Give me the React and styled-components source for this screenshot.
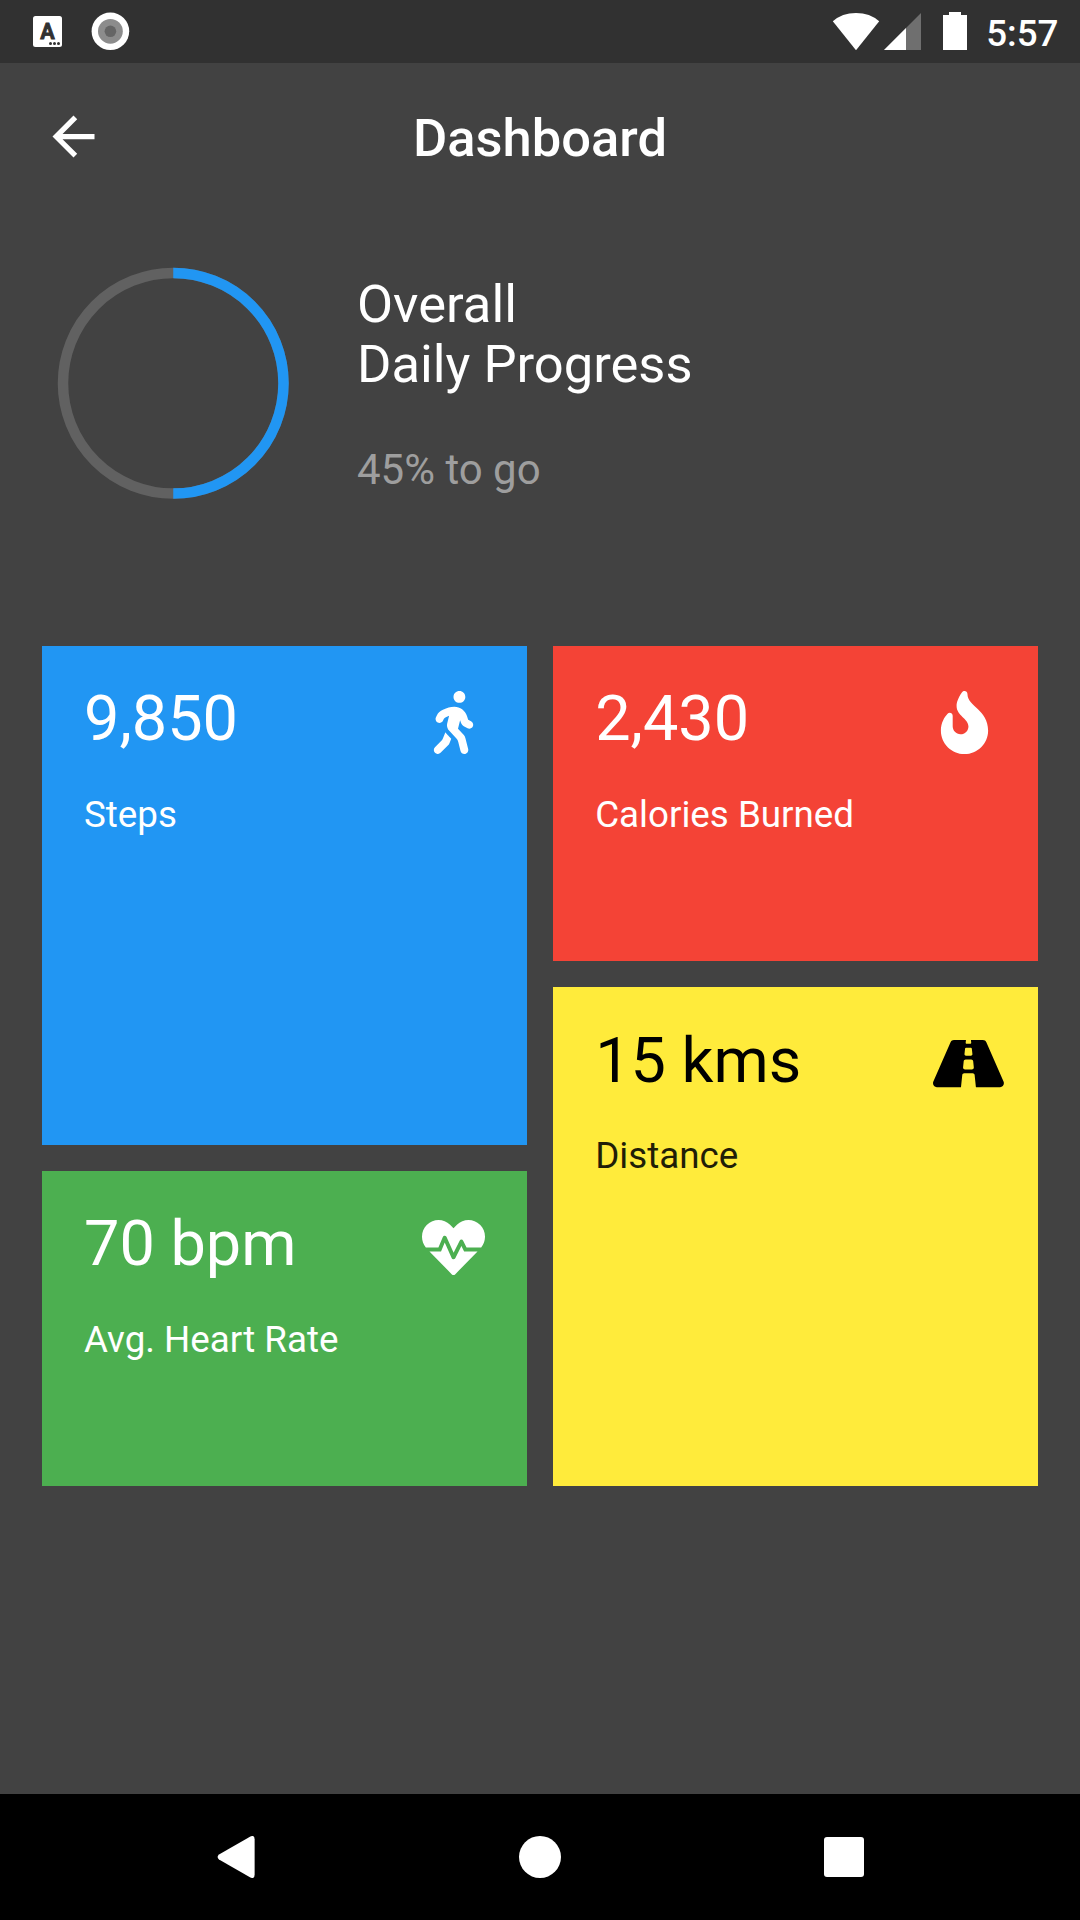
import React from "react";
import styled, { createGlobalStyle } from "styled-components";
import { FaWalking, FaFire, FaRoad, FaHeartbeat } from "react-icons/fa";

const GlobalStyle = createGlobalStyle`
  * { box-sizing: border-box; }
  body { margin: 0; background: #424242; font-family: Roboto, "Noto Sans", sans-serif; }
  h1, h2, p { margin: 0; font-weight: 400; }
  svg { display: block; flex: none; }
`;

const Screen = styled.div`
  width: 1080px;
  height: 1920px;
  display: flex;
  flex-direction: column;
  background: #424242;
  color: #fff;
  overflow: hidden;
`;

const StatusBar = styled.header`
  height: 63px;
  flex: none;
  display: flex;
  justify-content: space-between;
  padding: 0 21.5px 0 33.3px;
  background: #313131;
`;

const StatusGroup = styled.div`
  display: flex;
  align-items: center;
  gap: ${(p) => p.$gap}px;
`;

const KeyboardBadge = styled.div`
  width: 28.3px;
  height: 31px;
  border-radius: 2.5px;
  background: #fff;
  display: flex;
  flex-direction: column;
  align-items: center;
  padding-top: 7px;
`;

const BadgeLetter = styled.span`
  height: 17px;
  font-size: 21.5px;
  line-height: 17px;
  font-weight: 700;
  color: #313131;
  -webkit-text-stroke: 0.8px #313131;
`;

const BadgeDots = styled.div`
  display: flex;
  align-self: flex-end;
  gap: 1px;
  padding: 1.5px 2px 0 0;

  i {
    width: 3px;
    height: 3px;
    border-radius: 50%;
    background: #313131;
  }
`;

const Clock = styled.span`
  font-size: 36.75px;
  line-height: 43px;
  font-weight: 500;
  padding: 4px 0 0 18px;
`;

const AppBar = styled.div`
  height: 147px;
  flex: none;
  display: grid;
  grid-template-columns: 63px 1fr 63px;
  align-items: center;
  padding: 0 42px;
`;

const BackButton = styled.button`
  padding: 0;
  border: 0;
  background: none;
  color: inherit;
`;

const Title = styled.h1`
  padding-top: 2px;
  font-size: 52.5px;
  line-height: 62px;
  font-weight: 500;
  text-align: center;
`;

const Summary = styled.section`
  height: 435.75px;
  flex: none;
  display: flex;
  align-items: flex-start;
  gap: 68px;
  padding: 57px 42px 0 57px;
`;

const Ring = styled.svg`
  width: 232px;
  height: 232px;
`;

const SummaryText = styled.div`
  padding-top: 6.5px;
`;

const Heading = styled.h2`
  font-size: 52.5px;
  line-height: 60.5px;
`;

const Remaining = styled.p`
  margin-top: 50px;
  font-size: 42px;
  line-height: 49px;
  color: #9e9e9e;
`;

const Board = styled.main`
  flex: 1;
  display: grid;
  grid-template-columns: 1fr 1fr;
  align-items: start;
  gap: 26.25px;
  padding: 0 42px;
`;

const Column = styled.div`
  display: flex;
  flex-direction: column;
  gap: 26.25px;
`;

const Card = styled.article`
  height: ${(p) => (p.$tall ? 498.75 : 315)}px;
  display: flex;
  justify-content: space-between;
  align-items: flex-start;
  padding: 36.6px 42px 0;
  background: ${(p) => p.$color};
  color: ${(p) => (p.$dark ? "#000" : "#fff")};
`;

const Value = styled.p`
  font-size: 63px;
  line-height: 74px;
`;

const Label = styled.p`
  margin-top: 36.4px;
  font-size: 36.75px;
  line-height: 43px;
  white-space: nowrap;
  opacity: ${(p) => (p.$muted ? 0.87 : 1)};
`;

const IconSlot = styled.div`
  width: 63px;
  height: 63px;
  margin-top: 8.7px;
  display: flex;
  justify-content: ${(p) => (p.$wide ? "flex-start" : "center")};

  svg {
    width: ${(p) => (p.$wide ? "70.9px" : "auto")};
    height: 63px;
  }
`;

const NavBar = styled.nav`
  height: 126px;
  flex: none;
  display: flex;
  align-items: center;
  justify-content: center;
  gap: 262px;
  background: #000;
`;

function Metric({ value, label, icon: Icon, color, tall, dark, wide }) {
  return (
    <Card $color={color} $tall={tall} $dark={dark}>
      <div>
        <Value>{value}</Value>
        <Label $muted={dark}>{label}</Label>
      </div>
      <IconSlot $wide={wide}>
        <Icon />
      </IconSlot>
    </Card>
  );
}

export default function App() {
  return (
    <>
      <GlobalStyle />
      <Screen>
        <StatusBar>
          <StatusGroup $gap={29.4}>
            <KeyboardBadge>
              <BadgeLetter>A</BadgeLetter>
              <BadgeDots><i /><i /><i /></BadgeDots>
            </KeyboardBadge>
            <svg width="39" height="39" viewBox="0 0 39 39">
              <circle cx="19.4" cy="19.3" r="18.8" fill="#fff" />
              <circle cx="19.4" cy="19.3" r="12.4" fill="#8c8c8c" />
              <circle cx="19.4" cy="19.3" r="5.8" fill="#656565" />
            </svg>
          </StatusGroup>
          <StatusGroup $gap={0}>
            <svg width="136" height="63" viewBox="832 0 136 63">
              <path d="M832.8 21.3Q842 13 856 13T879.2 21.3L856 50.2Z" fill="#fff" />
              <path d="M884 50L921 13V50Z" fill="#6f6f6f" />
              <path d="M884 50L906 28V50Z" fill="#fff" />
              <path d="M943 15H949V12H961V15H967V50H943Z" fill="#fff" />
            </svg>
            <Clock>5:57</Clock>
          </StatusGroup>
        </StatusBar>

        <AppBar>
          <BackButton aria-label="Back">
            <svg width="63" height="63" viewBox="0 0 24 24" fill="currentColor">
              <path d="M20 11H7.83l5.59-5.59L12 4l-8 8 8 8 1.41-1.41L7.83 13H20v-2z" />
            </svg>
          </BackButton>
          <Title>Dashboard</Title>
        </AppBar>

        <Summary>
          <Ring viewBox="0 0 232 232" fill="none" strokeWidth="10.5">
            <circle cx="116.25" cy="116.25" r="110.25" stroke="#616161" />
            <path d="M116.25 6a110.25 110.25 0 0 1 0 220.5" stroke="#2196f3" />
          </Ring>
          <SummaryText>
            <Heading>Overall<br />Daily Progress</Heading>
            <Remaining>45% to go</Remaining>
          </SummaryText>
        </Summary>

        <Board>
          <Column>
            <Metric value="9,850" label="Steps" icon={FaWalking} color="#2196f3" tall />
            <Metric value="70 bpm" label="Avg. Heart Rate" icon={FaHeartbeat} color="#4caf50" />
          </Column>
          <Column>
            <Metric value="2,430" label="Calories Burned" icon={FaFire} color="#f44336" />
            <Metric value="15 kms" label="Distance" icon={FaRoad} color="#ffeb3b" tall dark wide />
          </Column>
        </Board>

        <NavBar>
          <svg width="42" height="42" viewBox="0 0 42 42" fill="#fff">
            <path d="M4 18.4L35.4.5Q39.6-1.4 39.6 3.2V38.8Q39.6 43.4 35.4 41.5L4 23.6Q1.2 21 4 18.4Z" />
          </svg>
          <svg width="42" height="42" viewBox="0 0 42 42" fill="#fff">
            <circle cx="21" cy="21" r="21" />
          </svg>
          <svg width="42" height="42" viewBox="0 0 42 42" fill="#fff">
            <rect x="1" y="1" width="40" height="40" rx="3" />
          </svg>
        </NavBar>
      </Screen>
    </>
  );
}
